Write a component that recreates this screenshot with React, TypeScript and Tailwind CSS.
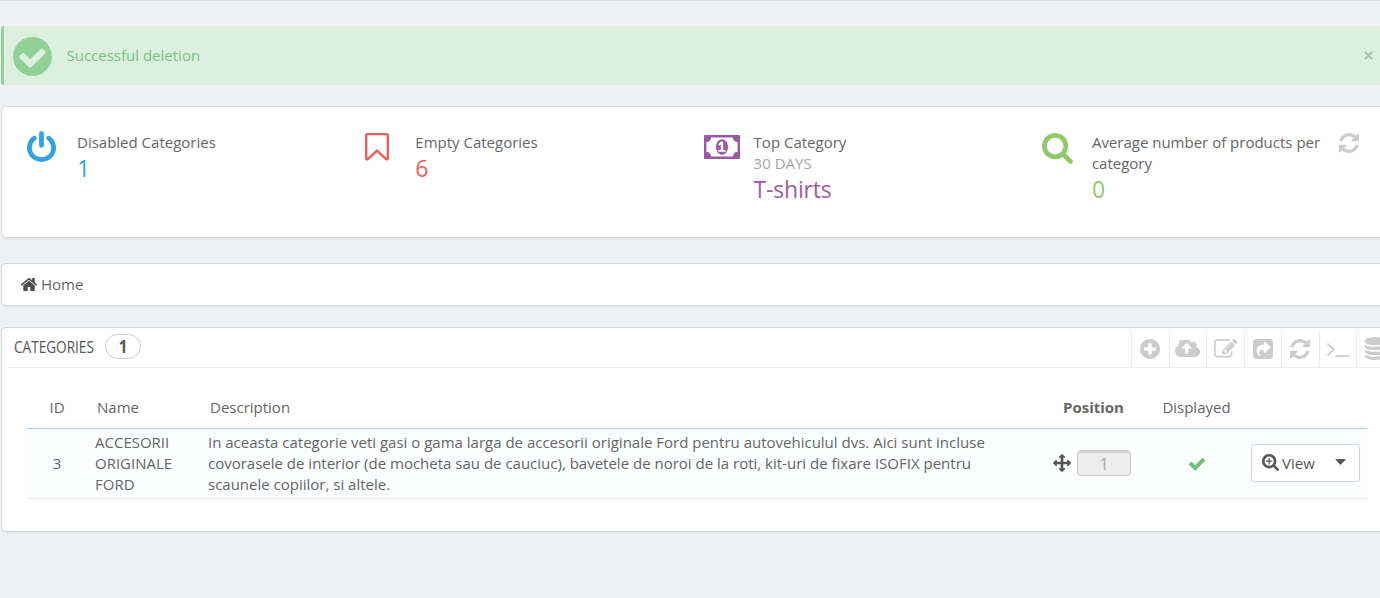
import React from 'react';

type IconProps = {
  box: string;
  d: string;
  className?: string;
};

const Icon: React.FC<IconProps> = ({ box, d, className = '' }) => (
  <svg viewBox={box} preserveAspectRatio="none" fill="currentColor" className={`block shrink-0 ${className}`}>
    <path fillRule="nonzero" d={d} />
  </svg>
);

const CIRCLE = 'm252 162q0 209-103 385.5t-279.5 279.5-385.5 103-385.5-103-279.5-279.5-103-385.5 103-385.5 279.5-279.5 385.5-103 385.5 103 279.5 279.5 103 385.5z';
const LENS = 'M1216 832q0-185-131.5-316.5t-316.5-131.5-316.5 131.5-131.5 316.5 131.5 316.5 316.5 131.5 316.5-131.5 131.5-316.5zm512 832q0 52-38 90t-90 38q-54 0-90-38l-343-342q-179 124-399 124-143 0-273.5-55.5t-225-150-150-225-55.5-273.5 55.5-273.5 150-225 225-150 273.5-55.5 273.5 55.5 225 150 150 225 55.5 273.5q0 220-124 399l343 343q37 37 37 90z';

const icons = {
  checkCircle: {
    box: '128 128 1536 1536',
    d: 'M1412 734q0-28-18-46l-91-90q-19-19-45-19t-45 19l-408 407-226-226q-19-19-45-19t-45 19l-91 90q-18 18-18 46 0 27 18 45l362 362q19 19 45 19 27 0 46-19l543-543q18-18 18-45z' + CIRCLE,
  },
  power: {
    box: '128 0 1536 1664',
    d: 'M1664 896q0 156-61 298t-164 245-245 164-298 61-298-61-245-164-164-245-61-298q0-182 80.5-343t226.5-270q43-32 95.5-25t83.5 50q32 42 24.5 94.5t-49.5 84.5q-98 74-151.5 181t-53.5 228q0 104 40.5 198.5t109.5 163.5 163.5 109.5 198.5 40.5 198.5-40.5 163.5-109.5 109.5-163.5 40.5-198.5q0-121-53.5-228t-151.5-181q-42-32-49.5-84.5t24.5-94.5q31-43 84-50t95 25q146 109 226.5 270t80.5 343zm-640-768v640q0 52-38 90t-90 38-90-38-38-90v-640q0-52 38-90t90-38 90 38 38 90z',
  },
  bookmark: {
    box: '256 128 1280 1536',
    d: 'M1408 256h-1024v1242l423-406 89-85 89 85 423 406v-1242zm12-128q23 0 44 9 33 13 52.5 41t19.5 62v1289q0 34-19.5 62t-52.5 41q-19 8-44 8-48 0-83-32l-441-424-441 424q-36 33-83 33-23 0-44-9-33-13-52.5-41t-19.5-62v-1289q0-34 19.5-62t52.5-41q21-9 44-9h1048z',
  },
  money: {
    box: '0 256 1920 1280',
    d: 'M768 1152h384v-96h-128v-448h-114l-148 137 77 80q42-37 55-57h2v288h-128v96zm512-256q0 70-21 142t-59.5 134-101.5 101-138 39-138-39-101.5-101-59.5-134-21-142 21-142 59.5-134 101.5-101 138-39 138 39 101.5 101 59.5 134 21 142zm512 256v-512q-106 0-181-75t-75-181h-1152q0 106-75 181t-181 75v512q106 0 181 75t75 181h1152q0-106 75-181t181-75zm128-832v1152q0 26-19 45t-45 19h-1792q-26 0-45-19t-19-45v-1152q0-26 19-45t45-19h1792q26 0 45 19t19 45z',
  },
  search: { box: '64 128 1664 1664', d: LENS },
  searchPlus: {
    box: '64 128 1664 1664',
    d: 'M1088 800v64q0 13-9.5 22.5t-22.5 9.5h-224v224q0 13-9.5 22.5t-22.5 9.5h-64q-13 0-22.5-9.5t-9.5-22.5v-224h-224q-13 0-22.5-9.5t-9.5-22.5v-64q0-13 9.5-22.5t22.5-9.5h224v-224q0-13 9.5-22.5t22.5-9.5h64q13 0 22.5 9.5t9.5 22.5v224h224q13 0 22.5 9.5t9.5 22.5z' + LENS,
  },
  refresh: {
    box: '128 128 1536 1536',
    d: 'M1639 1056q0 5-1 7-64 268-268 434.5t-478 166.5q-146 0-282.5-55t-243.5-157l-129 129q-19 19-45 19t-45-19-19-45v-448q0-26 19-45t45-19h448q26 0 45 19t19 45-19 45l-137 137q71 66 161 102t187 36q134 0 250-65t186-179q11-17 53-117 8-23 30-23h192q13 0 22.5 9.5t9.5 22.5zm25-800v448q0 26-19 45t-45 19h-448q-26 0-45-19t-19-45 19-45l138-138q-148-137-349-137-134 0-250 65t-186 179q-11 17-53 117-8 23-30 23h-199q-13 0-22.5-9.5t-9.5-22.5v-7q65-268 270-434.5t480-166.5q146 0 284 55.5t245 156.5l130-129q19-19 45-19t45 19 19 45z',
  },
  home: {
    box: '90 248 1612 1288',
    d: 'M1472 992v480q0 26-19 45t-45 19h-384v-384h-256v384h-384q-26 0-45-19t-19-45v-480q0-1 .5-3t.5-3l575-474 575 474q1 2 1 6zm223-69l-62 74q-8 9-21 11h-3q-13 0-21-7l-692-577-692 577q-12 8-24 7-13-2-21-11l-62-74q-8-10-7-23.5t11-21.5l719-599q32-26 76-26t76 26l244 204v-195q0-14 9-23t23-9h192q14 0 23 9t9 23v408l219 182q10 8 11 21.5t-7 23.5z',
  },
  plusCircle: {
    box: '128 128 1536 1536',
    d: 'M1344 960v-128q0-26-19-45t-45-19h-256v-256q0-26-19-45t-45-19h-128q-26 0-45 19t-19 45v256h-256q-26 0-45 19t-19 45v128q0 26 19 45t45 19h256v256q0 26 19 45t45 19h128q26 0 45-19t19-45v-256h256q26 0 45-19t19-45zm320-64q0 209-103 385.5t-279.5 279.5-385.5 103-385.5-103-279.5-279.5-103-385.5 103-385.5 279.5-279.5 385.5-103 385.5 103 279.5 279.5 103 385.5z',
  },
  cloudUpload: {
    box: '0 256 1920 1280',
    d: 'M1280 864q0-14-9-23l-352-352q-9-9-23-9t-23 9l-351 351q-10 12-10 24 0 14 9 23t23 9h224v352q0 13 9.5 22.5t22.5 9.5h192q13 0 22.5-9.5t9.5-22.5v-352h224q13 0 22.5-9.5t9.5-22.5zm640 288q0 159-112.5 271.5t-271.5 112.5h-1088q-185 0-316.5-131.5t-131.5-316.5q0-130 70-240t188-165q-2-30-2-43 0-212 150-362t362-150q156 0 285.5 87t188.5 231q71-62 166-62 106 0 181 75t75 181q0 76-41 138 130 31 213.5 135.5t83.5 238.5z',
  },
  edit: {
    box: '0 128 1792 1408',
    d: 'M888 1184l116-116-152-152-116 116v56h96v96h56zm440-720q-16-16-33 1l-350 350q-17 17-1 33t33-1l350-350q17-17 1-33zm80 594v190q0 119-84.5 203.5t-203.5 84.5h-832q-119 0-203.5-84.5t-84.5-203.5v-832q0-119 84.5-203.5t203.5-84.5h832q63 0 117 25 15 7 18 23 3 17-9 29l-49 49q-14 14-32 8-23-6-45-6h-832q-66 0-113 47t-47 113v832q0 66 47 113t113 47h832q66 0 113-47t47-113v-126q0-13 9-22l64-64q15-15 35-7t20 29zm-96-738l288 288-672 672h-288v-288zm444 132l-92 92-288-288 92-92q28-28 68-28t68 28l152 152q28 28 28 68t-28 68z',
  },
  terminal: {
    box: '77 461 1651 1075',
    d: 'M649 983l-466 466q-10 10-23 10t-23-10l-50-50q-10-10-10-23t10-23l393-393-393-393q-10-10-10-23t10-23l50-50q10-10 23-10t23 10l466 466q10 10 10 23t-10 23zm1079 457v64q0 14-9 23t-23 9h-960q-14 0-23-9t-9-23v-64q0-14 9-23t23-9h960q14 0 23 9t9 23z',
  },
  database: {
    box: '128 0 1536 1792',
    d: 'M896 768q237 0 443-43t325-127v170q0 69-103 128t-280 93.5-385 34.5-385-34.5-280-93.5-103-128v-170q119 84 325 127t443 43zm0 768q237 0 443-43t325-127v170q0 69-103 128t-280 93.5-385 34.5-385-34.5-280-93.5-103-128v-170q119 84 325 127t443 43zm0-384q237 0 443-43t325-127v170q0 69-103 128t-280 93.5-385 34.5-385-34.5-280-93.5-103-128v-170q119 84 325 127t443 43zm0-1152q208 0 385 34.5t280 93.5 103 128v128q0 69-103 128t-280 93.5-385 34.5-385-34.5-280-93.5-103-128v-128q0-69 103-128t280-93.5 385-34.5z',
  },
  arrows: {
    box: '0 0 1792 1792',
    d: 'M1792 896q0 26-19 45l-256 256q-19 19-45 19t-45-19-19-45v-128h-384v384h128q26 0 45 19t19 45-19 45l-256 256q-19 19-45 19t-45-19l-256-256q-19-19-19-45t19-45 45-19h128v-384h-384v128q0 26-19 45t-45 19-45-19l-256-256q-19-19-19-45t19-45l256-256q19-19 45-19t45 19 19 45v128h384v-384h-128q-26 0-45-19t-19-45 19-45l256-256q19-19 45-19t45 19l256 256q19 19 19 45t-19 45-45 19h-128v384h384v-128q0-26 19-45t45-19 45 19l256 256q19 19 19 45z',
  },
  check: {
    box: '121 334 1550 1188',
    d: 'M1671 566q0 40-28 68l-724 724-136 136q-28 28-68 28t-68-28l-136-136-362-362q-28-28-28-68t28-68l136-136q28-28 68-28t68 28l294 295 656-657q28-28 68-28t68 28l136 136q28 28 28 68z',
  },
};

const ShareIcon: React.FC = () => (
  <svg viewBox="0 0 20 20" className="block size-5 shrink-0">
    <rect width="20" height="20" rx="3.7" fill="currentColor" />
    <path
      d="M10.800 3.200c0-.6.7-.9 1.200-.5l5.300 5c.3.3.3.8 0 1.100l-5.300 5c-.5.4-1.200.1-1.200-.5v-2.600c-4 0-5.100 1.500-4.100 5.800.1.5-.5.8-.9.4C1.800 11.600 3.200 5.800 10.800 5.800z"
      fill="#fff"
    />
  </svg>
);

type KpiProps = {
  icon: React.ReactNode;
  title: string;
  subtitle?: string;
  value: string;
  color: string;
};

const Kpi: React.FC<KpiProps> = ({ icon, title, subtitle, value, color }) => (
  <div className={`flex w-[338.3px] shrink-0 ${color}`}>
    <div className="w-[53px] shrink-0 pl-[3px]">{icon}</div>
    <div className="w-[235px] pt-[6px]">
      <div className="leading-[21px] text-[#666]">{title}</div>
      {subtitle && <div className="leading-[21px] text-[#a5a5a5]">{subtitle}</div>}
      <div className="text-[23px] leading-[31px] tracking-[-0.2px]">{value}</div>
    </div>
  </div>
);

const panel = 'rounded-[5px] border border-[#d3d8db] bg-white shadow-[0_2px_0_rgba(0,0,0,0.03)]';

const tools = [
  <Icon {...icons.plusCircle} className="size-5" />,
  <Icon {...icons.cloudUpload} className="h-[17px] w-[25px]" />,
  <Icon {...icons.edit} className="h-[18.500px] w-[23.500px]" />,
  <ShareIcon />,
  <Icon {...icons.refresh} className="size-5" />,
  <Icon {...icons.terminal} className="mt-[3px] h-[14px] w-[22px]" />,
  <Icon {...icons.database} className="h-[23px] w-5" />,
];

const App: React.FC = () => {
  return (
    <div className="h-[598px] overflow-hidden border-t border-[#dcdde0] bg-[#eff1f2] font-['Open_Sans',sans-serif] text-[15px] text-[#666]">
      <div className="-mr-5 ml-px pt-[25px]">
        {/* Confirmation message */}
        <div className="flex h-[59px] items-center rounded-[3px] border-l-[3px] border-[#95cd9d] bg-[#dcf0de] pr-[27px] pl-[9px] text-[#7bbf87]">
          <Icon {...icons.checkCircle} className="mt-[2px] size-[39px] text-[#91d097]" />
          <span className="ml-[14.500px] flex-1">Successful deletion</span>
          <svg viewBox="0 0 10 10" className="size-[9px] text-[#a9bdab]">
            <path d="M1 1l8 8M9 1l-8 8" stroke="currentColor" strokeWidth="2.200" />
          </svg>
        </div>

        {/* Key figures */}
        <div className={`${panel} mt-[21px] flex h-[132px] pt-[19px] pl-[22px]`}>
          <Kpi
            icon={<Icon {...icons.power} className="mt-[5px] h-[31px] w-[29px]" />}
            title="Disabled Categories"
            value="1"
            color="text-[#35a2dc]"
          />
          <Kpi
            icon={<Icon {...icons.bookmark} className="mt-[7px] h-[28px] w-[24px]" />}
            title="Empty Categories"
            value="6"
            color="text-[#e9605f]"
          />
          <Kpi
            icon={<Icon {...icons.money} className="mt-[9px] h-[24px] w-[36px]" />}
            title="Top Category"
            subtitle="30 DAYS"
            value="T-shirts"
            color="text-[#9b5ba2]"
          />
          <Kpi
            icon={<Icon {...icons.search} className="mt-[7px] size-[31px]" />}
            title="Average number of products per category"
            value="0"
            color="text-[#92c96a]"
          />
          <div className="-ml-[38px] pt-[7px] text-[#ccc]">
            <Icon {...icons.refresh} className="size-5" />
          </div>
        </div>

        {/* Breadcrumb */}
        <div className={`${panel} mt-[25px] flex h-[43px] items-center gap-1 pl-[19px]`}>
          <Icon {...icons.home} className="-mt-px h-[13px] w-4 text-[#4d4d4d]" />
          <span>Home</span>
        </div>

        {/* Category list */}
        <div className={`${panel} mt-[21px] h-[205px]`}>
          <div className="ml-[6px] flex h-10 border-b border-[#eaedef]">
            <div className="flex flex-1 items-center pl-[5px] text-[#555]">
              <span className="-mt-[2px] w-[92px] pl-px text-[17px] whitespace-nowrap">
                <span className="inline-block origin-left scale-x-[0.800]">CATEGORIES</span>
              </span>
              <span className="-mt-[2px] flex h-[25px] w-9 items-center justify-center rounded-full border border-[#ccc] text-[18px] font-bold">
                <span className="-mt-px scale-x-[0.850]">1</span>
              </span>
            </div>
            <div className="-mr-2 flex w-[276px] pt-[2px] text-[#ccc]">
              {tools.map((tool, i) => (
                <div key={i} className="flex w-[37.500px] shrink-0 items-center justify-center border-l border-[#eaedef]">
                  {tool}
                </div>
              ))}
            </div>
          </div>

          <table className="mt-[18px] ml-[25px] w-[1340px] table-fixed border-collapse">
            <colgroup>
              <col className="w-[60px]" />
              <col className="w-[113px]" />
              <col className="w-[834px]" />
              <col className="w-[119px]" />
              <col className="w-[87px]" />
              <col className="w-[127px]" />
            </colgroup>
            <thead className="border-b border-[#a0d0eb]">
              <tr className="h-[42px] text-left">
                <th className="text-center font-normal">ID</th>
                <th className="pl-[10px] font-normal">Name</th>
                <th className="pl-[10px] font-normal">Description</th>
                <th className="text-center font-bold">Position</th>
                <th className="text-center font-normal">Displayed</th>
                <th></th>
              </tr>
            </thead>
            <tbody>
              <tr className="h-[70px] border-b border-[#eaedef] bg-[#fbfdfe] leading-[21px]">
                <td className="text-center">3</td>
                <td className="px-2">ACCESORII ORIGINALE FORD</td>
                <td className="px-2">
                  In aceasta categorie veti gasi o gama larga de accesorii originale Ford pentru autovehiculul dvs. Aici
                  sunt incluse covorasele de interior (de mocheta sau de cauciuc), bavetele de noroi de la roti, kit-uri
                  de fixare ISOFIX pentru scaunele copiilor, si altele.
                </td>
                <td>
                  <div className="flex items-center gap-[6.500px] pl-[18.500px]">
                    <Icon {...icons.arrows} className="-mt-px size-[18px] text-[#555]" />
                    <span className="flex h-[26px] w-[54px] items-center justify-center rounded-[4px] border border-[#ccc] bg-[#eee] text-[17px] text-[#aaa] shadow-[inset_0_2px_1px_rgba(0,0,0,0.12)]">
                      1
                    </span>
                  </div>
                </td>
                <td>
                  <Icon {...icons.check} className="mx-auto mt-[3px] h-[12.500px] w-4 text-[#72c279]" />
                </td>
                <td>
                  <div className="ml-[11px] flex h-[38px] w-[109px] items-center rounded-[3px] border border-[#d3d8db] bg-white pl-[10px] text-[#555]">
                    <Icon {...icons.searchPlus} className="-mt-[2px] size-[17px]" />
                    <span className="ml-[3px]">View</span>
                    <svg viewBox="0 0 11 6" className="-mt-[2px] ml-[20px] h-[6px] w-[11px]">
                      <path d="M0 0h11L5.500 6z" fill="currentColor" />
                    </svg>
                  </div>
                </td>
              </tr>
            </tbody>
          </table>
        </div>
      </div>
    </div>
  );
};

export default App;
